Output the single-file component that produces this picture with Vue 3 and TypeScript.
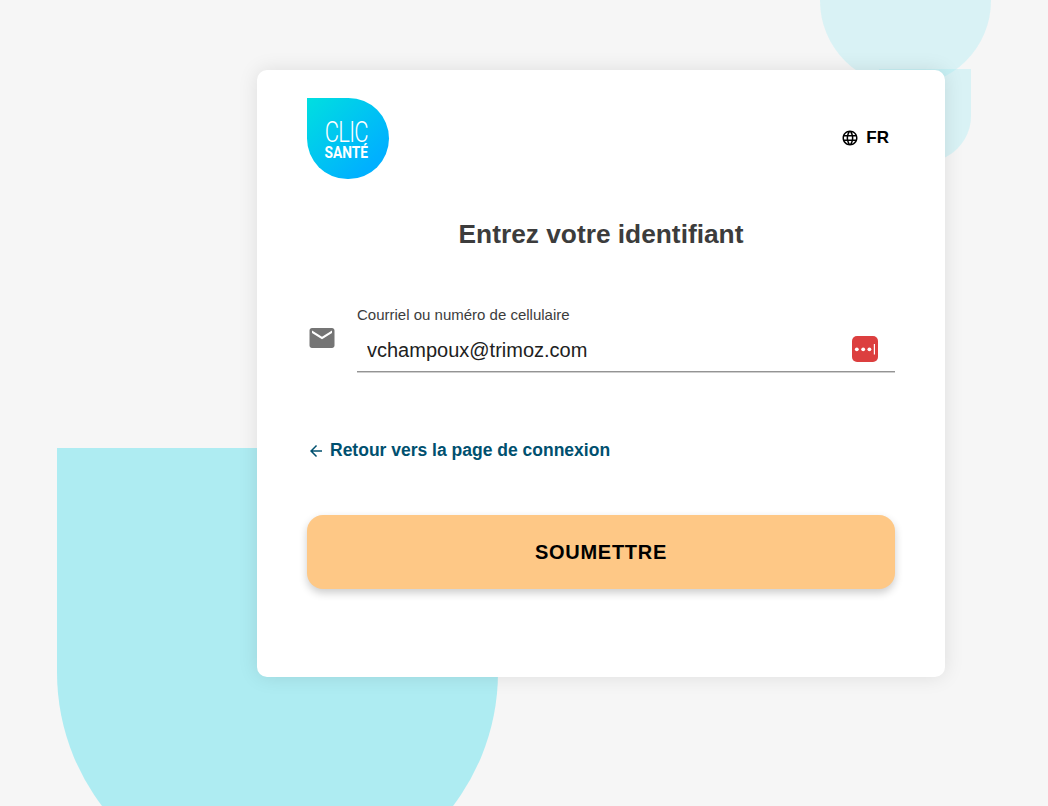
<script setup lang="ts">
import { ref } from 'vue'

const identifier = ref<string>('vchampoux@trimoz.com')
</script>

<template>
  <div class="page">
    <div class="shape shape-big"></div>
    <div class="shape shape-circle"></div>
    <div class="shape shape-small"></div>

    <main class="card">
      <header class="card-header">
        <div class="logo">
          <span class="logo-clic">CLIC</span>
          <span class="logo-sante">SANTÉ</span>
        </div>
        <button class="lang" type="button">
          <svg class="lang-icon" viewBox="0 0 24 24" width="18" height="18">
            <path d="M11.99 2C6.47 2 2 6.48 2 12s4.47 10 9.99 10C17.52 22 22 17.52 22 12S17.52 2 11.99 2zm6.93 6h-2.95c-.32-1.25-.78-2.45-1.38-3.56 1.84.63 3.37 1.91 4.33 3.56zM12 4.04c.83 1.2 1.48 2.53 1.91 3.96h-3.82c.43-1.43 1.08-2.76 1.91-3.96zM4.26 14C4.1 13.36 4 12.69 4 12s.1-1.36.26-2h3.38c-.08.66-.14 1.32-.14 2 0 .68.06 1.34.14 2H4.26zm.82 2h2.95c.32 1.25.78 2.45 1.38 3.56-1.84-.63-3.37-1.9-4.33-3.56zm2.95-8H5.08c.96-1.66 2.49-2.93 4.33-3.56C8.81 5.55 8.35 6.75 8.03 8zM12 19.96c-.83-1.2-1.48-2.53-1.91-3.96h3.82c-.43 1.43-1.08 2.76-1.91 3.96zM14.34 14H9.66c-.09-.66-.16-1.32-.16-2 0-.68.07-1.35.16-2h4.68c.09.65.16 1.32.16 2 0 .68-.07 1.34-.16 2zm.25 5.56c.6-1.11 1.06-2.31 1.38-3.56h2.95c-.96 1.65-2.49 2.93-4.33 3.56zM16.36 14c.08-.66.14-1.32.14-2 0-.68-.06-1.34-.14-2h3.38c.16.64.26 1.31.26 2s-.1 1.36-.26 2h-3.38z" />
          </svg>
          <span>FR</span>
        </button>
      </header>

      <h1 class="title">Entrez votre identifiant</h1>

      <div class="field">
        <svg class="field-icon" viewBox="0 0 24 24" width="30" height="30">
          <path d="M20 4H4c-1.1 0-1.99.9-1.99 2L2 18c0 1.1.9 2 2 2h16c1.1 0 2-.9 2-2V6c0-1.1-.9-2-2-2zm0 4l-8 5-8-5V6l8 5 8-5v2z" />
        </svg>
        <div class="field-body">
          <label class="field-label" for="identifier">Courriel ou numéro de cellulaire</label>
          <div class="field-control">
            <input id="identifier" v-model="identifier" class="field-input" type="text" />
            <svg class="pass-icon" viewBox="0 0 26 26" width="26" height="26">
              <rect width="26" height="26" rx="5" fill="#dc3f3f" />
              <circle cx="4.8" cy="13.3" r="1.9" fill="#fff" />
              <circle cx="11.2" cy="13.3" r="1.9" fill="#fff" />
              <circle cx="17.4" cy="13.3" r="1.9" fill="#fff" />
              <rect x="21.8" y="8" width="1.2" height="10.5" fill="#fff" />
            </svg>
          </div>
        </div>
      </div>

      <a class="back-link" href="#">
        <svg viewBox="0 0 24 24" width="18" height="18">
          <path d="M20 11H7.83l5.59-5.59L12 4l-8 8 8 8 1.41-1.41L7.83 13H20v-2z" />
        </svg>
        <span>Retour vers la page de connexion</span>
      </a>

      <button class="submit" type="button">SOUMETTRE</button>
    </main>
  </div>
</template>

<style>
html,
body {
  margin: 0;
  background: #f6f6f6;
}
</style>

<style scoped>
.page {
  position: relative;
  height: 806px;
  overflow: hidden;
  box-sizing: border-box;
  padding: 70px 0 0 257px;
  background: #f6f6f6;
  font-family: "Liberation Sans", Arial, sans-serif;
}

/* formes decoratives du fond */
.shape {
  position: absolute;
}

.shape-big {
  left: 57px;
  top: 448px;
  width: 441px;
  height: 445px;
  background: #aeecf2;
  border-radius: 0 0 220.5px 220.5px;
}

.shape-circle {
  left: 820px;
  top: -85px;
  width: 171px;
  height: 171px;
  border-radius: 50%;
  background: rgba(165, 236, 243, 0.36);
}

.shape-small {
  left: 879px;
  top: 69px;
  width: 92px;
  height: 93px;
  border-radius: 0 0 46px 46px;
  background: rgba(165, 236, 243, 0.36);
}

.card {
  position: relative;
  box-sizing: border-box;
  width: 688px;
  height: 607px;
  padding: 28px 50px 0;
  background: #fff;
  border-radius: 10px;
  box-shadow: 0 0 20px rgba(0, 0, 0, 0.1);
}

.card-header {
  display: flex;
  align-items: center;
  justify-content: space-between;
}

.logo {
  display: flex;
  flex-direction: column;
  align-items: center;
  justify-content: center;
  width: 82px;
  height: 81px;
  padding: 2px 4px 0 0;
  box-sizing: border-box;
  border-radius: 0 41px 41px 41px;
  background: linear-gradient(135deg, #00dfe0 0%, #00b0ff 80%);
  color: #fff;
}

.logo-clic {
  font-family: Roboto, "Liberation Sans", sans-serif;
  font-weight: 300;
  font-size: 29px;
  line-height: 25px;
  letter-spacing: -1px;
  transform: scaleX(0.76);
}

.logo-sante {
  font-family: Roboto, "Liberation Sans", sans-serif;
  font-weight: 700;
  font-size: 16px;
  line-height: 15px;
  transform: scaleX(0.86);
}

.lang {
  display: flex;
  align-items: center;
  gap: 7px;
  margin: 0 6px 2px 0;
  padding: 0;
  border: 0;
  background: none;
  color: #000;
  font-family: inherit;
  font-size: 17px;
  font-weight: 700;
}

.lang-icon {
  display: block;
}

.title {
  margin: 38px 0 0;
  color: #3c3c3c;
  font-size: 26.3px;
  font-weight: 700;
  line-height: 34px;
  text-align: center;
}

.field {
  display: flex;
  align-items: flex-start;
  gap: 20px;
  margin-top: 56px;
}

.field-icon {
  display: block;
  flex: none;
  margin-top: 16px;
  fill: #757575;
}

.field-body {
  flex: 1;
}

.field-label {
  display: block;
  color: #3c3c3c;
  font-size: 15px;
  line-height: 16px;
}

.field-control {
  position: relative;
  margin-top: 6px;
  border-bottom: 1px solid #949494;
  box-shadow: 0 1px 0 rgba(148, 148, 148, 0.45);
}

.field-input {
  display: block;
  box-sizing: border-box;
  width: 100%;
  height: 42px;
  padding: 0 50px 0 10px;
  border: 0;
  outline: none;
  background: transparent;
  color: #212121;
  font-family: inherit;
  font-size: 20px;
}

.pass-icon {
  position: absolute;
  right: 17px;
  top: 7px;
}

.back-link {
  display: flex;
  align-items: center;
  gap: 5px;
  margin-top: 68px;
  color: #00506f;
  font-size: 17.5px;
  font-weight: 700;
  text-decoration: none;
}

.back-link svg {
  display: block;
  fill: #00506f;
}

.submit {
  display: block;
  width: 100%;
  height: 74px;
  margin-top: 54px;
  border: 0;
  border-radius: 16px;
  background: #fec886;
  box-shadow: 0 4px 8px rgba(0, 0, 0, 0.2);
  color: #000;
  font-family: inherit;
  font-size: 20px;
  font-weight: 700;
  letter-spacing: 0.7px;
}
</style>
